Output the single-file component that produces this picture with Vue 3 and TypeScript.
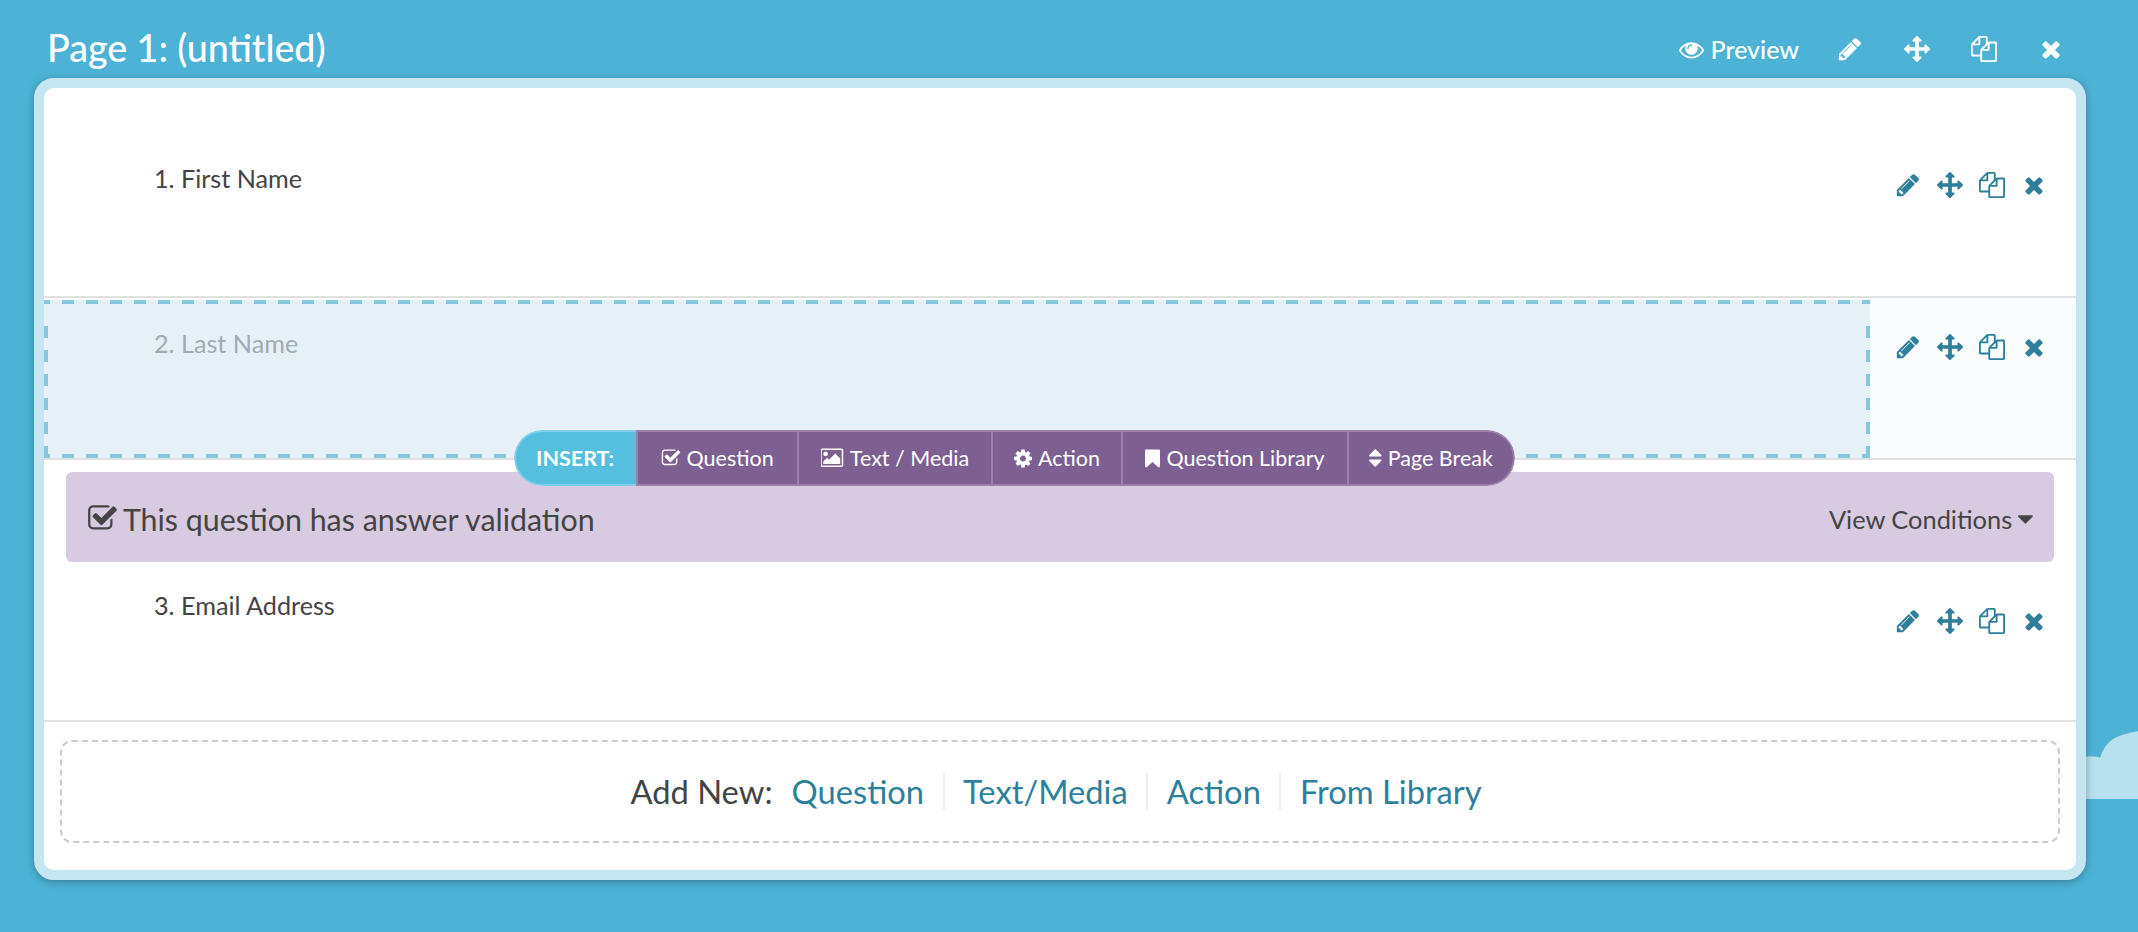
<script setup lang="ts">
import { h } from 'vue'

type IconName = 'pencil' | 'arrows' | 'files' | 'times' | 'eye' | 'check' | 'picture' | 'cog' | 'bookmark' | 'sort' | 'caret'

const icons: Record<IconName, { x?: number; w: number; d: string }> = {
  pencil: { w: 1792, d: 'M491 1536l91-91-235-235-91 91v107h128v128h107zm523-928q0-22-22-22-10 0-17 7l-542 542q-7 7-7 17 0 22 22 22 10 0 17-7l542-542q7-7 7-17zm-54-192l416 416-832 832h-416v-416zm683 96q0 53-37 90l-166 166-416-416 166-165q36-38 90-38 53 0 91 38l235 234q37 39 37 91z' },
  arrows: { w: 1792, d: 'M1792 896q0 26-19 45l-256 256q-19 19-45 19t-45-19-19-45v-128h-384v384h128q26 0 45 19t19 45-19 45l-256 256q-19 19-45 19t-45-19l-256-256q-19-19-19-45t19-45 45-19h128v-384h-384v128q0 26-19 45t-45 19-45-19l-256-256q-19-19-19-45t19-45l256-256q19-19 45-19t45 19 19 45v128h384v-384h-128q-26 0-45-19t-19-45 19-45l256-256q19-19 45-19t45 19l256 256q19 19 19 45t-19 45-45 19h-128v384h384v-128q0-26 19-45t45-19 45 19l256 256q19 19 19 45z' },
  files: { w: 1792, d: 'M1696 384q40 0 68 28t28 68v1216q0 40-28 68t-68 28h-960q-40 0-68-28t-28-68v-288h-544q-40 0-68-28t-28-68v-672q0-40 20-88t48-76l408-408q28-28 76-48t88-20h416q40 0 68 28t28 68v328q68-40 128-40h416zm-544 213l-299 299h299v-299zm-640-384l-299 299h299v-299zm196 647l316-316v-416h-384v416q0 40-28 68t-68 28h-416v640h512v-256q0-40 20-88t48-76zm956 804v-1152h-384v416q0 40-28 68t-68 28h-416v640h896z' },
  times: { w: 1792, d: 'M1490 1322q0 40-28 68l-136 136q-28 28-68 28t-68-28l-294-294-294 294q-28 28-68 28t-68-28l-136-136q-28-28-28-68t28-68l294-294-294-294q-28-28-28-68t28-68l136-136q28-28 68-28t68 28l294 294 294-294q28-28 68-28t68 28l136 136q28 28 28 68t-28 68l-294 294 294 294q28 28 28 68z' },
  eye: { w: 1792, d: 'M1664 960q-152-236-381-353 61 104 61 225 0 185-131.5 316.5t-316.5 131.5-316.5-131.5-131.5-316.5q0-121 61-225-229 117-381 353 133 205 333.5 326.5t434.5 121.5 434.5-121.5 333.5-326.5zm-720-384q0-20-14-34t-34-14q-125 0-214.5 89.5t-89.5 214.5q0 20 14 34t34 14 34-14 14-34q0-86 61-147t147-61q20 0 34-14t14-34zm848 384q0 34-20 69-140 230-376.5 368.5t-499.5 138.5-499.5-139-376.5-368q-20-35-20-69t20-69q140-229 376.5-368t499.5-139 499.5 139 376.5 368q20 35 20 69z' },
  check: { w: 1728, d: 'M1472 930v318q0 119-84.5 203.5t-203.5 84.5h-832q-119 0-203.5-84.5t-84.5-203.5v-832q0-119 84.5-203.5t203.5-84.5h832q63 0 117 25 15 7 18 23 3 17-9 29l-49 49q-10 10-23 10-3 0-9-2-23-6-45-6h-832q-66 0-113 47t-47 113v832q0 66 47 113t113 47h832q66 0 113-47t47-113v-254q0-13 9-22l64-64q10-10 23-10 6 0 12 3 20 8 20 29zm231-489l-814 814q-24 24-57 24t-57-24l-430-430q-24-24-24-57t24-57l110-110q24-24 57-24t57 24l263 263 647-647q24-24 57-24t57 24l110 110q24 24 24 57t-24 57z' },
  picture: { w: 1920, d: 'M576 576q0 80-56 136t-136 56-136-56-56-136 56-136 136-56 136 56 56 136zm1024 384v448h-1408v-192l320-320 160 160 512-512zm96-704h-1600q-13 0-22.5 9.5t-9.5 22.5v1216q0 13 9.5 22.5t22.5 9.5h1600q13 0 22.5-9.5t9.5-22.5v-1216q0-13-9.5-22.5t-22.5-9.5zm160 32v1216q0 66-47 113t-113 47h-1600q-66 0-113-47t-47-113v-1216q0-66 47-113t113-47h1600q66 0 113 47t47 113z' },
  cog: { x: 128, w: 1536, d: 'M1152 896q0-106-75-181t-181-75-181 75-75 181 75 181 181 75 181-75 75-181zm512-109v222q0 12-8 23t-20 13l-185 28q-19 54-39 91 35 50 107 138 10 12 10 25t-9 23q-27 37-99 108t-94 71q-12 0-26-9l-138-108q-44 23-91 38-16 136-29 186-7 28-36 28h-222q-14 0-24.5-8.5t-11.5-21.5l-28-184q-49-16-90-37l-141 107q-10 9-25 9-14 0-25-11-126-114-165-168-7-10-7-23 0-12 8-23 15-21 51-66.5t54-70.5q-27-50-41-99l-183-27q-13-2-21-12.5t-8-23.5v-222q0-12 8-23t19-13l186-28q14-46 39-92-40-57-107-138-10-12-10-24 0-10 9-23 26-36 98.5-107.5t94.5-71.5q13 0 26 10l138 107q44-23 91-38 16-136 29-186 7-28 36-28h222q14 0 24.5 8.5t11.5 21.5l28 184q49 16 90 37l142-107q9-9 24-9 13 0 25 10 129 119 165 170 7 8 7 22 0 12-8 23-15 21-51 66.5t-54 70.5q26 50 41 98l183 28q13 2 21 12.5t8 23.5z' },
  bookmark: { w: 1280, d: 'M1164 128q23 0 44 9 33 13 52.5 41t19.5 62v1289q0 34-19.5 62t-52.5 41q-19 8-44 8-48 0-83-32l-441-424-441 424q-36 33-83 33-23 0-44-9-33-13-52.5-41t-19.5-62v-1289q0-34 19.5-62t52.5-41q21-9 44-9h1048z' },
  sort: { w: 1024, d: 'M1024 1088q0 26-19 45l-448 448q-19 19-45 19t-45-19l-448-448q-19-19-19-45t19-45 45-19h896q26 0 45 19t19 45zm0-384q0 26-19 45t-45 19h-896q-26 0-45-19t-19-45 19-45l448-448q19-19 45-19t45 19l448 448q19 19 19 45z' },
  caret: { w: 1024, d: 'M1024 704q0 26-19 45l-448 448q-19 19-45 19t-45-19l-448-448q-19-19-19-45t19-45 45-19h896q26 0 45 19t19 45z' },
}

const Fa = (props: { name: IconName; size: number }) => {
  const icon = icons[props.name]
  return h(
    'svg',
    {
      viewBox: `${icon.x ?? 0} 0 ${icon.w} 1792`,
      width: (icon.w / 1792) * props.size,
      height: props.size,
      fill: 'currentColor',
      style: { flex: 'none', display: 'block' },
    },
    [h('path', { d: icon.d })],
  )
}
Fa.props = ['name', 'size']

const rowActions: IconName[] = ['pencil', 'arrows', 'files', 'times']

const inserts: { label: string; icon: IconName; size: number; width: number }[] = [
  { label: 'Question', icon: 'check', size: 20, width: 161 },
  { label: 'Text / Media', icon: 'picture', size: 21.5, width: 194 },
  { label: 'Action', icon: 'cog', size: 21, width: 130 },
  { label: 'Question Library', icon: 'bookmark', size: 21, width: 226 },
  { label: 'Page Break', icon: 'sort', size: 22, width: 168 },
]

const addLinks = ['Question', 'Text/Media', 'Action', 'From Library']
</script>

<template>
  <div class="page">
    <svg class="cloud" viewBox="0 0 60 70" width="60" height="69">
      <path d="M0 27 Q8 24 20 27 Q24 14 33 8 Q44 2 60 0 V69 H0 Z" fill="#b8e1ef" />
    </svg>

    <header class="page-head">
      <h1 class="page-title">Page 1: (untitled)</h1>
      <div class="page-actions">
        <span class="preview"><Fa name="eye" :size="25" />Preview</span>
        <Fa name="pencil" :size="26" />
        <Fa name="arrows" :size="26" />
        <Fa name="files" :size="26" />
        <Fa name="times" :size="26" />
      </div>
    </header>

    <section class="panel">
      <div class="panel-inner">
        <div class="row row-one">
          <div class="q-title">1. First Name</div>
          <div class="actions">
            <Fa v-for="a in rowActions" :key="a" :name="a" :size="26" />
          </div>
        </div>

        <div class="row row-two">
          <div class="drop-box">
            <div class="q-title muted">2. Last Name</div>
          </div>
          <div class="actions">
            <Fa v-for="a in rowActions" :key="a" :name="a" :size="26" />
          </div>
        </div>

        <div class="row-three">
          <div class="banner">
            <div class="banner-left"><Fa name="check" :size="31" />This question has answer validation</div>
            <div class="banner-right">View Conditions<Fa name="caret" :size="26" /></div>
          </div>
          <div class="row row-email">
            <div class="q-title">3. Email Address</div>
            <div class="actions">
              <Fa v-for="a in rowActions" :key="a" :name="a" :size="26" />
            </div>
          </div>
        </div>

        <div class="add-wrap">
          <div class="add-box">
            <span class="add-label">Add New:</span>
            <template v-for="(link, i) in addLinks" :key="link">
              <span v-if="i > 0" class="add-sep"></span>
              <a class="add-link">{{ link }}</a>
            </template>
          </div>
        </div>

        <div class="insert-bar">
          <div class="insert-label">INSERT:</div>
          <div v-for="item in inserts" :key="item.label" class="insert-item" :style="{ width: item.width + 'px' }">
            <Fa :name="item.icon" :size="item.size" />
            <span>{{ item.label }}</span>
          </div>
        </div>
      </div>
    </section>
  </div>
</template>

<style>
html, body { margin: 0; background: #4db3d6; }
</style>

<style scoped>
.page {
  position: relative;
  height: 932px;
  width: 2138px;
  overflow: hidden;
  background: #4db3d6;
  font-family: Lato, "Open Sans", sans-serif;
  text-rendering: optimizeLegibility;
  color: #444;
}
.cloud { position: absolute; left: 2080px; top: 731px; }
.page-head {
  height: 78px;
  box-sizing: border-box;
  padding: 0 74px 4px 47px;
  display: flex;
  justify-content: space-between;
  align-items: center;
  color: #fff;
  position: relative;
}
.page-title { margin: 22px 0 0; font-size: 37.6px; font-weight: 500; line-height: 56px; }
.page-actions { display: flex; align-items: center; gap: 41px; margin-top: 24px; }
.preview { display: flex; align-items: center; gap: 7px; font-size: 25px; font-weight: 500; margin-right: -3px; }
.panel {
  position: relative;
  margin: 0 52px 0 34px;
  height: 802px;
  box-sizing: border-box;
  border: 10px solid #c5e6f0;
  border-radius: 20px;
  box-shadow: 0 2px 8px rgba(0, 0, 0, 0.3);
  background: #c5e6f0;
}
.panel-inner {
  position: relative;
  height: 782px;
  background: #fff;
  border-radius: 10px;
}
.row { display: flex; justify-content: space-between; box-sizing: border-box; }
.row-one { height: 210px; border-bottom: 2px solid #e2e2e2; padding: 66px 0 0 110px; }
.q-title { font-size: 25.2px; line-height: 48px; color: #444; }
.q-title.muted { color: #a0abb2; }
.actions { display: flex; gap: 16px; padding-right: 29px; height: 26px; color: #2e7f9c; }
.row-one .actions { margin-top: 18px; }
.row-two { height: 162px; background: #f9fdfe; border-bottom: 2px solid #e2e2e2; padding-top: 2px; }
.row-two .actions { margin-top: 34px; }
.drop-box {
  box-sizing: border-box;
  width: 1826px;
  height: 158px;
  padding: 19px 0 0 110px;
  background:
    linear-gradient(90deg, #88c8de 12px, transparent 12px) -6px 0 / 24px 4px repeat-x,
    linear-gradient(90deg, #88c8de 12px, transparent 12px) -6px 100% / 24px 4px repeat-x,
    repeating-linear-gradient(180deg, #88c8de 0 12px, transparent 12px 24px) 0 100% / 4px calc(100% - 26px) no-repeat,
    repeating-linear-gradient(180deg, #88c8de 0 12px, transparent 12px 24px) 100% 100% / 4px calc(100% - 26px) no-repeat,
    #e6f1f7;
}
.insert-bar {
  position: absolute;
  left: 470px;
  top: 342px;
  height: 56px;
  display: flex;
  color: #fff;
  font-size: 21.5px;
  border-radius: 28px;
  overflow: hidden;
}
.insert-label {
  width: 122px;
  box-sizing: border-box;
  background: #56bfe0;
  border: 2px solid #7fcfe8;
  border-right: 0;
  border-radius: 28px 0 0 28px;
  font-weight: 700;
  display: flex;
  align-items: center;
  justify-content: center;
  padding-right: 2px;
}
.insert-item {
  display: flex;
  align-items: center;
  justify-content: center;
  gap: 6px;
  box-sizing: border-box;
  background: #7e5f92;
  border-top: 2px solid #9a80ab;
  border-bottom: 2px solid #9a80ab;
  border-left: 2px solid #9a80ab;
}
.insert-item:last-child {
  border-right: 2px solid #9a80ab;
  border-radius: 0 28px 28px 0;
}
.row-three { height: 262px; border-bottom: 2px solid #e2e2e2; box-sizing: border-box; padding-top: 12px; }
.banner {
  margin: 0 22px;
  height: 90px;
  box-sizing: border-box;
  padding: 3px 21px 0 21px;
  background: #d8cae0;
  border-radius: 6px;
  display: flex;
  align-items: center;
  justify-content: space-between;
}
.banner-left { display: flex; align-items: center; gap: 6px; font-size: 30.4px; color: #444; }
.banner-right { display: flex; align-items: center; gap: 6px; font-size: 25.4px; color: #444; }
.row-email { padding: 19px 0 0 110px; }
.row-email .actions { margin-top: 27px; }
.add-wrap { padding: 18px 16px 0; }
.add-box {
  height: 103px;
  box-sizing: border-box;
  border: 2px dashed #ccc;
  border-radius: 12px;
  display: flex;
  align-items: center;
  justify-content: center;
  font-size: 32.7px;
  padding-right: 8px;
}
.add-label { color: #444; margin-right: 19px; }
.add-link { color: #2e7f9c; }
.add-sep { width: 2px; height: 37px; background: #eee; margin: 0 18.5px; }
</style>
